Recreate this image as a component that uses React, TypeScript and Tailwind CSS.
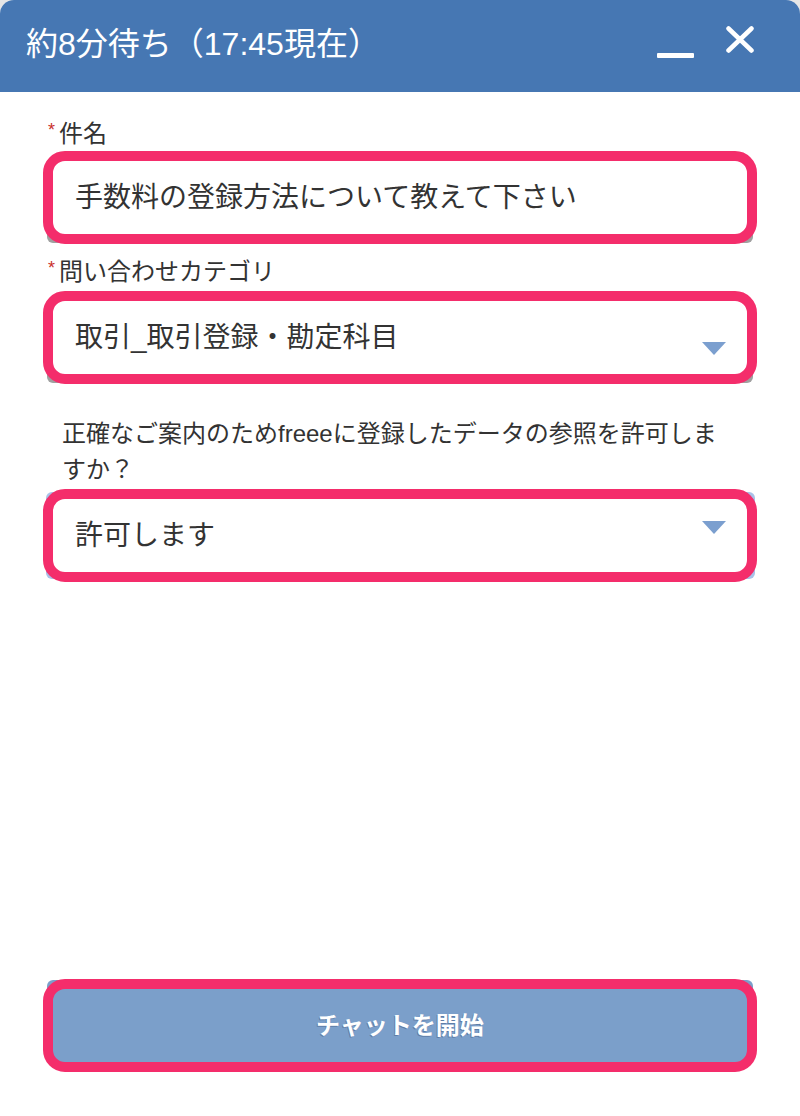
import type { ReactNode } from 'react'

const font = { fontFamily: '"Liberation Sans", "Noto Sans CJK JP", sans-serif' }

function Caret({ className }: { className: string }) {
  return (
    <svg width="24" height="13" viewBox="0 0 24 13" className={className}>
      <polygon points="0,0 24,0 12,13" fill="#7b9fcf" />
    </svg>
  )
}

function Label({ text }: { text: string }) {
  return (
    <div className="flex items-start pl-[5px] h-[34px]">
      <span className="text-[18px] leading-[18px] mt-[4px] mr-[4px] text-[#c9302c]">*</span>
      <span className="text-[24px] leading-[34px] text-[#333]">{text}</span>
    </div>
  )
}

function Field({ underlay, inner, children }: { underlay: string; inner: string; children: ReactNode }) {
  return (
    <div className="relative h-[93px]">
      <div className={`absolute rounded-[6px] ${underlay}`} />
      <div className={`relative h-full rounded-[22px] border-[10px] border-[#f42d6b] flex ${inner}`}>
        {children}
      </div>
    </div>
  )
}

export default function App() {
  return (
    <div className="min-h-screen bg-[#e6e6e6]" style={font}>
      <div className="min-h-[1116px] bg-white rounded-t-[14px] flex flex-col">
        {/* Header */}
        <div className="h-[92px] bg-[#4677b3] rounded-t-[14px] flex justify-between pl-[26px] pr-[46px]">
          <div className="flex items-center pb-[5px] text-white text-[32px] leading-none">約8分待ち（17:45現在）</div>
          <div className="flex items-start gap-[32px] pt-[26px]">
            <svg width="37" height="32" viewBox="0 0 37 32">
              <rect x="0" y="27" width="37" height="5" rx="1" fill="#fff" />
            </svg>
            <svg width="28" height="27" viewBox="0 0 28 27">
              <path d="M2.5 2.5 L25.5 24.5 M25.5 2.5 L2.5 24.5" stroke="#fff" strokeWidth="4.5" strokeLinecap="round" />
            </svg>
          </div>
        </div>

        {/* Form */}
        <div className="flex-1 flex flex-col px-[43px] pt-[25px] pb-[44px]">
          <Label text="件名" />
          <Field underlay="left-[4px] right-[4px] top-[10px] bottom-[1px] bg-[#a0a0a0]" inner="bg-white items-center pl-[22px]">
            <span className="text-[28px] text-[#333]">手数料の登録方法について教えて下さい</span>
          </Field>

          <div className="mt-[11px]">
            <Label text="問い合わせカテゴリ" />
          </div>
          <div className="mt-[2px]">
            <Field underlay="left-[4px] right-[4px] top-[10px] bottom-[1px] bg-[#a0a0a0]" inner="bg-white items-center justify-between pl-[22px] pr-[21px]">
              <span className="text-[28px] text-[#333]">取引_取引登録・勘定科目</span>
              <Caret className="self-start mt-[41px]" />
            </Field>
          </div>

          <p className="mt-[32px] pl-[19px] pr-[30px] text-[24px] leading-[36px] text-[#333]">
            正確なご案内のためfreeeに登録したデータの参照を許可しますか？
          </p>
          <div className="mt-[1px]">
            <Field underlay="left-[3px] right-[2px] top-[3px] bottom-[3px] bg-[#a9c1e8]" inner="bg-white items-center justify-between pl-[22px] pr-[21px]">
              <span className="text-[28px] text-[#333]">許可します</span>
              <Caret className="self-start mt-[22px]" />
            </Field>
          </div>

          <div className="mt-auto">
            <Field underlay="left-[4px] right-[4px] top-[1px] bottom-[10px] bg-[#7b9fca]" inner="bg-[#7b9fca] items-center justify-center">
              <span className="text-[24px] font-bold text-white [text-shadow:-1px_1px_0_rgba(40,60,100,0.35)]">チャットを開始</span>
            </Field>
          </div>
        </div>
      </div>
    </div>
  )
}
